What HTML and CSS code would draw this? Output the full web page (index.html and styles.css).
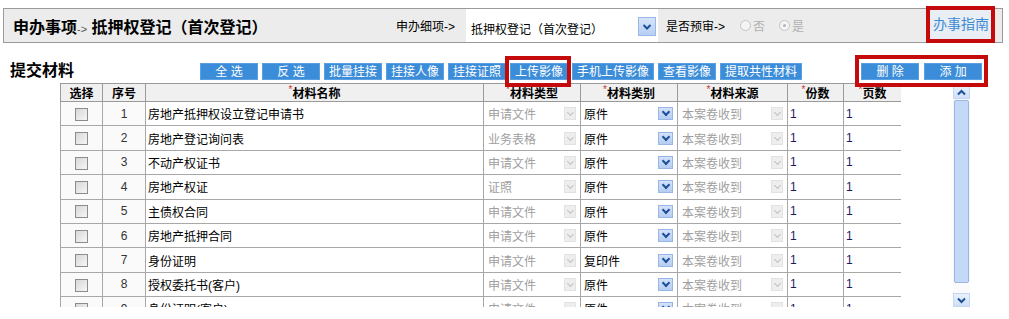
FILE: index.html
```html
<!DOCTYPE html>
<html lang="zh-CN">
<head>
<meta charset="utf-8">
<title>抵押权登记</title>
<link rel="stylesheet" href="styles.css">
</head>
<body>
<div class="page">
  <div class="topbar">
    <div class="title">申办事项<span class="title-arrow">-&gt;</span> 抵押权登记（首次登记）</div>
    <div class="field-label">申办细项-&gt;</div>
    <div class="top-select">
      <span class="top-select-text">抵押权登记（首次登记）</span>
      <span class="drop drop-big"><svg width="10" height="8" viewBox="0 0 10 8"><path d="M1.5 2 L5 5.5 L8.5 2" fill="none" stroke="#1d4f9c" stroke-width="2"/></svg></span>
    </div>
    <div class="field-label label-pre">是否预审-&gt;</div>
    <span class="radio"><span class="dot"></span>否</span>
    <span class="radio"><span class="dot checked"></span>是</span>
    <div class="guide-wrap"><span class="guide">办事指南</span></div>
  </div>

  <div class="toolbar">
    <div class="section-title">提交材料</div>
    <div class="btns">
      <span class="btn btn-wide">全 选</span>
      <span class="btn btn-wide">反 选</span>
      <span class="btn">批量挂接</span>
      <span class="btn">挂接人像</span>
      <span class="btn">挂接证照</span>
      <span class="btn marked">上传影像<span class="mark mark-upload"></span></span>
      <span class="btn">手机上传影像</span>
      <span class="btn">查看影像</span>
      <span class="btn">提取共性材料</span>
    </div>
    <div class="btns btns-right">
      <span class="btn btn-wide">删 除</span>
      <span class="btn btn-wide">添 加</span>
      <span class="mark mark-right"></span>
    </div>
  </div>

  <div class="grid-area">
    <div class="table-wrap">
      <table class="mat">
        <colgroup>
          <col class="c-sel"><col class="c-no"><col class="c-name"><col class="c-type"><col class="c-cat"><col class="c-src"><col class="c-cnt"><col class="c-pg">
        </colgroup>
        <thead>
          <tr>
            <th>选择</th><th>序号</th><th><i>*</i>材料名称</th><th><i>*</i>材料类型</th><th><i>*</i>材料类别</th><th><i>*</i>材料来源</th><th><i>*</i>份数</th><th><i>*</i>页数</th>
          </tr>
        </thead>
        <tbody>
          <tr><td class="cb"><span class="box"></span></td><td class="no">1</td><td class="name">房地产抵押权设立登记申请书</td><td><div class="sel off"><span>申请文件</span><b class="dd"></b></div></td><td><div class="sel on"><span>原件</span><b class="dd"></b></div></td><td><div class="sel off"><span>本案卷收到</span><b class="dd"></b></div></td><td class="num">1</td><td class="num">1</td></tr>
          <tr><td class="cb"><span class="box"></span></td><td class="no">2</td><td class="name">房地产登记询问表</td><td><div class="sel off"><span>业务表格</span><b class="dd"></b></div></td><td><div class="sel on"><span>原件</span><b class="dd"></b></div></td><td><div class="sel off"><span>本案卷收到</span><b class="dd"></b></div></td><td class="num">1</td><td class="num">1</td></tr>
          <tr><td class="cb"><span class="box"></span></td><td class="no">3</td><td class="name">不动产权证书</td><td><div class="sel off"><span>申请文件</span><b class="dd"></b></div></td><td><div class="sel on"><span>原件</span><b class="dd"></b></div></td><td><div class="sel off"><span>本案卷收到</span><b class="dd"></b></div></td><td class="num">1</td><td class="num">1</td></tr>
          <tr><td class="cb"><span class="box"></span></td><td class="no">4</td><td class="name">房地产权证</td><td><div class="sel off"><span>证照</span><b class="dd"></b></div></td><td><div class="sel on"><span>原件</span><b class="dd"></b></div></td><td><div class="sel off"><span>本案卷收到</span><b class="dd"></b></div></td><td class="num">1</td><td class="num">1</td></tr>
          <tr><td class="cb"><span class="box"></span></td><td class="no">5</td><td class="name">主债权合同</td><td><div class="sel off"><span>申请文件</span><b class="dd"></b></div></td><td><div class="sel on"><span>原件</span><b class="dd"></b></div></td><td><div class="sel off"><span>本案卷收到</span><b class="dd"></b></div></td><td class="num">1</td><td class="num">1</td></tr>
          <tr><td class="cb"><span class="box"></span></td><td class="no">6</td><td class="name">房地产抵押合同</td><td><div class="sel off"><span>申请文件</span><b class="dd"></b></div></td><td><div class="sel on"><span>原件</span><b class="dd"></b></div></td><td><div class="sel off"><span>本案卷收到</span><b class="dd"></b></div></td><td class="num">1</td><td class="num">1</td></tr>
          <tr><td class="cb"><span class="box"></span></td><td class="no">7</td><td class="name">身份证明</td><td><div class="sel off"><span>申请文件</span><b class="dd"></b></div></td><td><div class="sel on"><span>复印件</span><b class="dd"></b></div></td><td><div class="sel off"><span>本案卷收到</span><b class="dd"></b></div></td><td class="num">1</td><td class="num">1</td></tr>
          <tr><td class="cb"><span class="box"></span></td><td class="no">8</td><td class="name">授权委托书(客户)</td><td><div class="sel off"><span>申请文件</span><b class="dd"></b></div></td><td><div class="sel on"><span>原件</span><b class="dd"></b></div></td><td><div class="sel off"><span>本案卷收到</span><b class="dd"></b></div></td><td class="num">1</td><td class="num">1</td></tr>
          <tr><td class="cb"><span class="box"></span></td><td class="no">9</td><td class="name">身份证明(客户)</td><td><div class="sel off"><span>申请文件</span><b class="dd"></b></div></td><td><div class="sel on"><span>原件</span><b class="dd"></b></div></td><td><div class="sel off"><span>本案卷收到</span><b class="dd"></b></div></td><td class="num">1</td><td class="num">1</td></tr>
        </tbody>
      </table>
    </div>
    <div class="scrollbar">
      <span class="sb-btn"><svg width="9" height="7" viewBox="0 0 9 7"><path d="M1 5.5 L4.5 2 L8 5.5" fill="none" stroke="#1d4f9c" stroke-width="2"/></svg></span>
      <span class="sb-thumb"></span>
      <span class="sb-track"></span>
      <span class="sb-btn"><svg width="9" height="7" viewBox="0 0 9 7"><path d="M1 1.5 L4.5 5 L8 1.5" fill="none" stroke="#1d4f9c" stroke-width="2"/></svg></span>
    </div>
  </div>
</div>
</body>
</html>
```

FILE: styles.css
```css
* { box-sizing: border-box; }
html, body { margin: 0; padding: 0; background: #fff; }
body {
  font-family: "Liberation Sans", "Noto Sans CJK SC", sans-serif;
  font-size: 12px;
  color: #000;
}
.page { padding-top: 8px; width: 1009px; }

/* top bar */
.topbar {
  margin-left: 3px;
  width: 1000px;
  height: 35px;
  border: 1px solid #9a9a9a;
  background: #ececec;
  display: flex;
  align-items: center;
}
.title {
  width: 392px;
  padding-left: 9px;
  font-size: 16px;
  font-weight: bold;
  white-space: nowrap;
}
.title-arrow { font-size: 11px; font-weight: normal; color: #555; }
.field-label { font-size: 12px; white-space: nowrap; width: 70px; }
.top-select {
  width: 192px;
  height: 33px;
  background: #fff;
  display: flex;
  align-items: center;
  padding: 2px 2px 0 5px;
}
.top-select-text { flex: 1; font-size: 12px; padding-top: 4px; }
.drop-big {
  width: 18px; height: 19px;
  background: linear-gradient(#d6e4fa, #b8cff3);
  border: 1px solid #9ab8e6;
  display: flex; align-items: center; justify-content: center;
}
.label-pre { margin-left: 8px; width: 74px; }
.radio {
  display: flex; align-items: center;
  color: #b0b0b0; font-size: 12px;
  margin-right: 14px;
}
.dot {
  width: 11px; height: 11px; border-radius: 50%;
  border: 1px solid #c4c4c4; background: #f4f4f4;
  margin-right: 2px; position: relative;
}
.dot.checked::after {
  content: ""; position: absolute; left: 3px; top: 3px;
  width: 3px; height: 3px; border-radius: 50%; background: #b5b5b5;
}
.guide-wrap { margin-left: auto; margin-right: 7px; }
.guide {
  display: block;
  border: 4px solid #c40a0a;
  background: #e9eef4;
  color: #3d8bd5;
  font-size: 14px;
  padding: 3px 2px 4px 3px;
  height: 37px;
  margin-top: -2px;
  line-height: 23px;
}

/* toolbar */
.toolbar {
  height: 40px;
  display: flex;
  align-items: flex-end;
  padding-bottom: 3px;
}
.section-title {
  width: 200px;
  padding-left: 10px;
  font-size: 16px;
  font-weight: bold;
  line-height: 18px;
}
.btns { display: flex; gap: 4px; position: relative; }
.btns-right { margin-left: 59px; gap: 5px; }
.btn {
  position: relative;
  display: block;
  height: 17px;
  line-height: 17px;
  padding: 0 4px;
  background: #3c8dd9;
  color: #fff;
  font-size: 12px;
  text-align: center;
  white-space: nowrap;
  border: 1px solid #5aa0e0;
}
.btn-wide { width: 58px; }
.mark {
  position: absolute;
  border: 4px solid #c40a0a;
  pointer-events: none;
}
.mark-upload { left: -6px; right: -4px; top: -8px; bottom: -8px; }
.mark-right { left: -6px; right: -6px; top: -8px; bottom: -7px; }

/* grid */
.grid-area { display: flex; align-items: flex-start; }
.table-wrap {
  margin-left: 60px;
  width: 841px;
  height: 224px;
  overflow: hidden;
}
.mat {
  border-collapse: collapse;
  table-layout: fixed;
  width: 841px;
}
.c-sel { width: 42px; }
.c-no { width: 43px; }
.c-name { width: 338px; }
.c-type { width: 97px; }
.c-cat { width: 97px; }
.c-src { width: 110px; }
.c-cnt { width: 56px; }
.c-pg { width: 58px; }
.mat th, .mat td {
  border: 1px solid #a8a8a8;
  padding: 0;
  font-size: 12px;
  white-space: nowrap;
  overflow: hidden;
}
.mat th {
  height: 17px;
  background: #f0f0f0;
  font-weight: bold;
  text-align: center;
  border-color: #9a9a9a;
}
.mat th i { color: #d03030; font-style: normal; font-weight: normal; font-size: 10px; vertical-align: top; }
.mat td { height: 24.4px; }
.cb { text-align: center; background: #fafafa; }
.box {
  display: inline-block;
  width: 13px; height: 13px;
  border: 1px solid #8c8c8c;
  background: linear-gradient(135deg, #d8d8d8, #f6f6f6);
  vertical-align: middle;
}
.no { text-align: center; color: #333; background: #fafafa; }
.name { padding-left: 2px !important; }
.num { padding-left: 2px !important; color: #1c1c5c; }
.sel {
  display: flex;
  align-items: center;
  padding: 0 4px 0 3px;
  height: 18px;
}
.sel span { flex: 1; }
.sel.off { color: #a0a0a0; }
.sel.off span { padding-left: 1px; }
.dd { display: block; position: relative; }
.sel.off .dd {
  width: 12px; height: 13px;
  background: #eeeeee;
  border: 1px solid #e2e2e2;
}
.sel.off .dd::after {
  content: ""; position: absolute; left: 3px; top: 2px;
  width: 4px; height: 4px;
  border-right: 1px solid #c0c0c0; border-bottom: 1px solid #c0c0c0;
  transform: rotate(45deg);
}
.sel.on .dd {
  width: 15px; height: 13px;
  background: linear-gradient(#d4e2f9, #b6cdf2);
  border: 1px solid #98b6e6;
}
.sel.on .dd::after {
  content: ""; position: absolute; left: 4px; top: 1px;
  width: 4px; height: 4px;
  border-right: 2px solid #1d4f9c; border-bottom: 2px solid #1d4f9c;
  transform: rotate(45deg);
}

/* scrollbar */
.scrollbar {
  margin-left: 52px;
  margin-top: 2px;
  width: 17px;
  height: 222px;
  display: flex;
  flex-direction: column;
  background: #f7f7f7;
}
.sb-btn {
  height: 14px;
  display: flex; align-items: center; justify-content: center;
  background: linear-gradient(#eaf1fc, #cfdff7);
  border: 1px solid #c4d6f2;
}
.sb-thumb {
  height: 183px;
  margin: 1px 1px 0;
  background: #c4d8f7;
  border: 1px solid #98b6e6;
  border-radius: 2px;
}
.sb-track { flex: 1; background: #fbfbfb; }
```
